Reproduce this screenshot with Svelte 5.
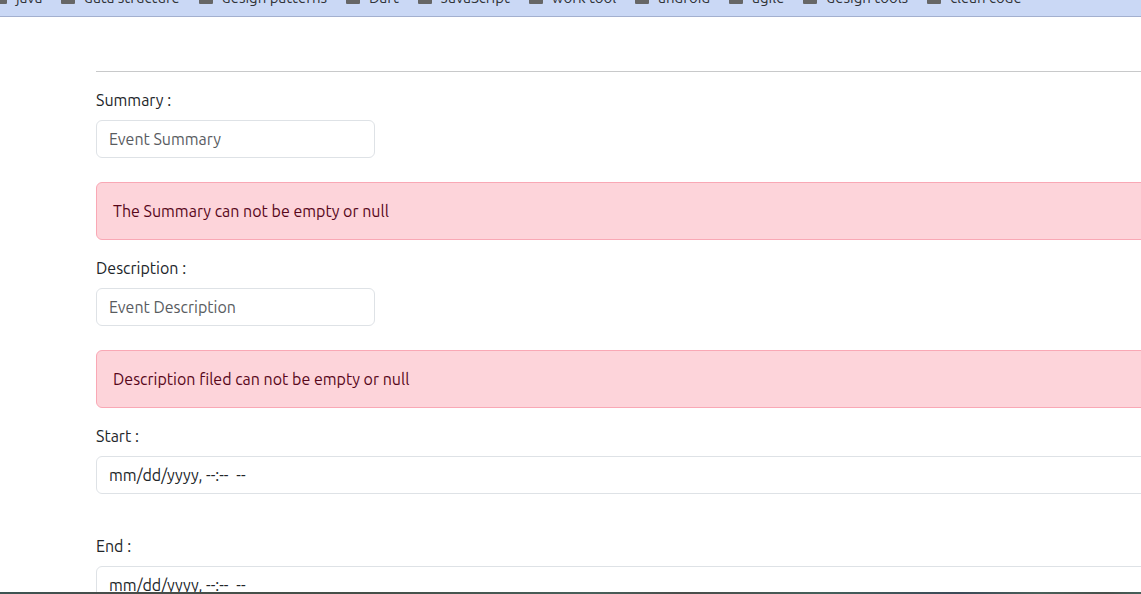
<script>
  const bookmarks = [
    'java',
    'data structure',
    'design patterns',
    'Dart',
    'JavaScript',
    'work tool',
    'android',
    'agile',
    'design tools',
    'clean code'
  ];

  let summary = $state('');
  let description = $state('');
  let start = $state('');
  let end = $state('');
</script>

<div class="window">
  <nav class="bookmarks" aria-label="Bookmarks">
    <ul>
      {#each bookmarks as name}
        <li>
          <a href="#{name.replace(' ', '-')}">
            <svg width="14" height="12" viewBox="0 0 14 12" aria-hidden="true">
              <path d="M1 0h4l2 2h6a1 1 0 0 1 1 1v8a1 1 0 0 1-1 1H1a1 1 0 0 1-1-1V1a1 1 0 0 1 1-1z" />
            </svg>
            <span>{name}</span>
          </a>
        </li>
      {/each}
    </ul>
  </nav>

  <main>
    <form>
      <hr />

      <div class="field">
        <label for="summary">Summary :</label>
        <input id="summary" class="short" type="text" placeholder="Event Summary" bind:value={summary} />
      </div>
      {#if !summary}
        <div class="alert" role="alert">The Summary can not be empty or null</div>
      {/if}

      <div class="field">
        <label for="description">Description :</label>
        <input id="description" class="short" type="text" placeholder="Event Description" bind:value={description} />
      </div>
      {#if !description}
        <div class="alert" role="alert">Description filed can not be empty or null</div>
      {/if}

      <div class="field date">
        <label for="start">Start :</label>
        <input id="start" type="datetime-local" bind:value={start} />
      </div>

      <div class="field date">
        <label for="end">End :</label>
        <input id="end" type="datetime-local" bind:value={end} />
      </div>
    </form>
  </main>

  <div class="edge"></div>
</div>

<style>
  .window {
    display: flex;
    flex-direction: column;
    height: 100vh;
    overflow: hidden;
    background: #fff;
    color: #212529;
    font-family: Ubuntu, 'Noto Sans', 'Open Sans', sans-serif;
    font-size: 16px;
    line-height: 24px;
  }

  .bookmarks {
    display: flex;
    flex: none;
    align-items: flex-end;
    height: 16px;
    overflow: hidden;
    background: #cad8f5;
    border-bottom: 1px solid #a3b0cf;
  }

  ul {
    display: flex;
    gap: 19px;
    margin: 0 0 0 -7px;
    padding: 0 0 8px;
    list-style: none;
  }

  a {
    display: flex;
    align-items: center;
    gap: 9px;
    color: #303337;
    font-size: 15px;
    line-height: 20px;
    text-decoration: none;
    white-space: nowrap;
  }

  svg {
    flex: none;
    fill: #666;
  }

  main {
    flex: 1;
    min-height: 0;
    overflow: hidden;
    padding: 54px 0 0 96px;
  }

  /* The form runs on past the right edge of the window. */
  form {
    margin-right: -96px;
  }

  hr {
    margin: 0 0 16px;
    border: 0;
    border-top: 1px solid #c8c9ca;
  }

  .field {
    display: flex;
    flex-direction: column;
    align-items: flex-start;
    gap: 8px;
    margin-bottom: 24px;
  }

  .date {
    margin-bottom: 40px;
  }

  input {
    box-sizing: border-box;
    width: 100%;
    height: 38px;
    padding: 6px 12px;
    border: 1px solid #dee2e6;
    border-radius: 6px;
    background: #fff;
    color: #212529;
    font: inherit;
  }

  .short {
    width: 279px;
  }

  input::placeholder {
    color: #595c5f;
    opacity: 1;
  }

  input::-webkit-datetime-edit,
  input::-webkit-datetime-edit-fields-wrapper,
  input::-webkit-datetime-edit-month-field,
  input::-webkit-datetime-edit-day-field,
  input::-webkit-datetime-edit-year-field,
  input::-webkit-datetime-edit-hour-field,
  input::-webkit-datetime-edit-minute-field {
    padding: 0;
  }

  input::-webkit-datetime-edit-ampm-field {
    padding: 0 0 0 6px;
  }

  .alert {
    margin-bottom: 16px;
    padding: 16px;
    border: 1px solid #f9a8b5;
    border-radius: 6px;
    background: #fdd4da;
    color: #58071a;
  }

  .edge {
    flex: none;
    height: 2px;
    background: linear-gradient(90deg, #3d5553, #474c49 10%, #465049 20%, #454f48 32%, #48605a 52%, #4a4d4a 60%, #45605a 72%, #3c4a58 84%, #4a6059 91%, #48504b 97%, #45605a);
  }
</style>
